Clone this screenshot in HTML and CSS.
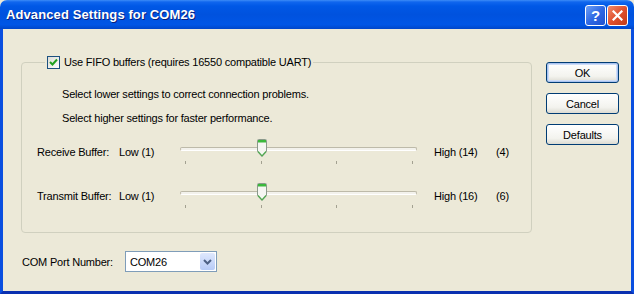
FILE: index.html
```html
<!DOCTYPE html>
<html lang="en">
<head>
    <meta charset="UTF-8">
    <title>Advanced Settings for COM26</title>
    <link rel="stylesheet" href="styles.css">
</head>
<body>
    <div class="window">
        <div class="titlebar">
            <span class="title">Advanced Settings for COM26</span>
            <div class="title-btns">
                <span class="tbtn help">?</span>
                <span class="tbtn close">
                    <svg width="11" height="11" viewBox="0 0 11 11"><path d="M1.5 1.5 L9.5 9.5 M9.5 1.5 L1.5 9.5" stroke="#fff" stroke-width="2.2" stroke-linecap="square"/></svg>
                </span>
            </div>
        </div>
        <div class="client">
            <div class="main">
                <fieldset class="group">
                    <legend>
                        <label class="check">
                            <span class="box">
                                <svg width="9" height="9" viewBox="0 0 9 9"><path d="M1 4 L3.5 6.5 L8 1.5" fill="none" stroke="#21a121" stroke-width="2"/></svg>
                            </span>
                            Use FIFO buffers (requires 16550 compatible UART)
                        </label>
                    </legend>
                    <p class="hint first">Select lower settings to correct connection problems.</p>
                    <p class="hint">Select higher settings for faster performance.</p>

                    <div class="slider-row">
                        <span class="lbl">Receive Buffer:</span>
                        <span class="low">Low (1)</span>
                        <div class="slider">
                            <div class="track"></div>
                            <span class="thumb" style="left: 76px">
                                <svg width="12" height="20" viewBox="0 0 12 20"><path d="M1.5 2.5 Q1.5 1.5 2.5 1.5 H9.5 Q10.5 1.5 10.5 2.5 V13.5 L6 18.5 L1.5 13.5 Z" fill="#f6f6f2" stroke="#8b9a8b"/><rect x="2" y="2" width="8" height="2.5" fill="#3cb83c"/><path d="M2 13.5 L6 17.8 L10 13.5" fill="none" stroke="#4ea84e" stroke-width="1.2"/></svg>
                            </span>
                            <div class="ticks"><i></i><i></i><i></i><i></i></div>
                        </div>
                        <span class="high">High (14)</span>
                        <span class="val">(4)</span>
                    </div>

                    <div class="slider-row">
                        <span class="lbl">Transmit Buffer:</span>
                        <span class="low">Low (1)</span>
                        <div class="slider">
                            <div class="track"></div>
                            <span class="thumb" style="left: 76px">
                                <svg width="12" height="20" viewBox="0 0 12 20"><path d="M1.5 2.5 Q1.5 1.5 2.5 1.5 H9.5 Q10.5 1.5 10.5 2.5 V13.5 L6 18.5 L1.5 13.5 Z" fill="#f6f6f2" stroke="#8b9a8b"/><rect x="2" y="2" width="8" height="2.5" fill="#3cb83c"/><path d="M2 13.5 L6 17.8 L10 13.5" fill="none" stroke="#4ea84e" stroke-width="1.2"/></svg>
                            </span>
                            <div class="ticks"><i></i><i></i><i></i><i></i></div>
                        </div>
                        <span class="high">High (16)</span>
                        <span class="val">(6)</span>
                    </div>
                </fieldset>

                <div class="buttons">
                    <button class="btn default">OK</button>
                    <button class="btn">Cancel</button>
                    <button class="btn">Defaults</button>
                </div>
            </div>

            <div class="port-row">
                <span class="port-label">COM Port Number:</span>
                <div class="combo">
                    <span class="combo-text">COM26</span>
                    <span class="combo-btn">
                        <svg width="9" height="6" viewBox="0 0 9 6"><path d="M1 1 L4.5 4.5 L8 1" fill="none" stroke="#4d6185" stroke-width="2"/></svg>
                    </span>
                </div>
            </div>
        </div>
    </div>
</body>
</html>
```

FILE: styles.css
```css
body {
    margin: 0;
    background: #ece9d8;
    font-family: "Liberation Sans", Arial, sans-serif;
    font-size: 11px;
    letter-spacing: -0.2px;
    color: #000;
}
.window {
    width: 634px;
    height: 294px;
    display: flex;
    flex-direction: column;
    box-sizing: border-box;
}
.titlebar {
    height: 29px;
    flex: none;
    display: flex;
    align-items: center;
    justify-content: space-between;
    padding: 0 6px 0 6px;
    border-radius: 7px 7px 0 0;
    background: linear-gradient(#3d8cf7 0, #1066ee 2px, #0058e6 6px, #0052de 50%, #0056e6 85%, #0046c9 100%);
}
.title {
    color: #fff;
    font-weight: bold;
    font-size: 13px;
    letter-spacing: 0.1px;
    text-shadow: 1px 1px 0 #0a1f7a;
    padding-bottom: 1px;
}
.title-btns {
    display: flex;
    gap: 1px;
    margin-top: 1px;
}
.tbtn {
    width: 19px;
    height: 19px;
    border: 1px solid #fff;
    border-radius: 3px;
    display: flex;
    align-items: center;
    justify-content: center;
    color: #fff;
    font-weight: bold;
    font-size: 15px;
}
.help {
    background: linear-gradient(135deg, #6e9ff5, #2f69e4 50%, #1e50cf);
}
.close {
    background: linear-gradient(135deg, #f08c6c, #e0502e 50%, #c23a17);
}
.client {
    flex: 1;
    border: 3px solid #0a4fe0;
    border-top: none;
    border-bottom-color: #0a30b0;
    padding: 26px 12px 0 18px;
    background: #ece9d8;
}
.main {
    display: flex;
    gap: 14px;
}
.group {
    width: 512px;
    box-sizing: border-box;
    margin: 0;
    padding: 0 0 20px 15px;
    border: 1px solid #d0d0bf;
    border-radius: 4px;
}
.group legend {
    margin-left: 8px;
    padding: 0 2px;
    line-height: 14px;
}
.check {
    display: flex;
    align-items: center;
    gap: 4px;
}
.box {
    width: 11px;
    height: 11px;
    border: 1px solid #1c5180;
    background: linear-gradient(135deg, #dcdcd6, #fff);
    display: flex;
    align-items: center;
    justify-content: center;
}
.hint {
    margin: 10px 0 0 25px;
    line-height: 14px;
}
.hint.first {
    margin-top: 18px;
}
.slider-row {
    display: flex;
    height: 30px;
    margin-top: 14px;
}
.hint + .slider-row {
    margin-top: 13px;
}
.slider-row span {
    margin-top: 7px;
    line-height: 14px;
}
.lbl {
    width: 82px;
}
.low {
    width: 61px;
}
.slider {
    width: 237px;
    position: relative;
}
.track {
    margin-top: 9px;
    height: 2px;
    border: 1px solid #bdbaa9;
    border-bottom-color: #fff;
    border-radius: 2px;
    background: #f3f2ec;
}
.slider .thumb {
    position: absolute;
    top: 0;
    margin: 0;
    line-height: 0;
}
.ticks {
    display: flex;
    justify-content: space-between;
    padding: 0 4px 0 5px;
    margin-top: 10px;
}
.ticks i {
    width: 1px;
    height: 3px;
    background: #a3a191;
}
.high {
    margin-left: 17px;
    width: 62px;
}
.buttons {
    display: flex;
    flex-direction: column;
    gap: 10px;
    margin-top: 7px;
}
.btn {
    width: 73px;
    height: 21px;
    padding: 0;
    font-family: inherit;
    font-size: 11px;
    letter-spacing: inherit;
    color: #000;
    border: 1px solid #003c74;
    border-radius: 3px;
    background: linear-gradient(#fff, #f3f3ee 70%, #dcdbd2);
}
.btn.default {
    box-shadow: inset 0 0 0 1px #a9c3f0, inset 0 0 0 2px #cddcf7;
}
.port-row {
    display: flex;
    align-items: center;
    margin-top: 18px;
    padding-left: 1px;
}
.port-label {
    width: 103px;
}
.combo {
    width: 90px;
    height: 19px;
    border: 1px solid #7f9db9;
    background: #fff;
    display: flex;
    align-items: center;
    justify-content: space-between;
}
.combo-text {
    padding-left: 4px;
}
.combo-btn {
    width: 15px;
    height: 17px;
    margin-right: 1px;
    border-radius: 2px;
    background: linear-gradient(#dfe8fd, #b7cbf7);
    display: flex;
    align-items: center;
    justify-content: center;
}
```
